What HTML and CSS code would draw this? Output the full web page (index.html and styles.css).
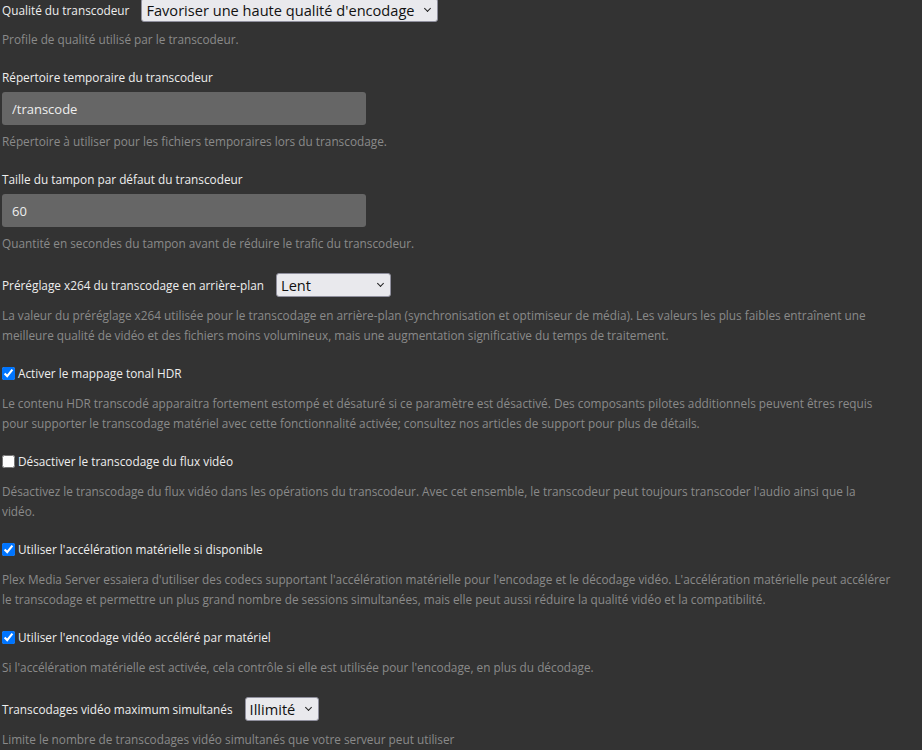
FILE: index.html
```html
<!DOCTYPE html>
<html lang="fr">
<head>
<meta charset="utf-8">
<title>Transcodeur</title>
<link rel="stylesheet" href="styles.css">
</head>
<body>
<form class="settings">
  <div class="setting first">
    <div class="row sel">
      <label class="label" for="quality">Qualité du transcodeur</label>
      <div class="select-wrap">
        <select id="quality" class="select"><option>Favoriser une haute qualité d'encodage</option></select>
      </div>
    </div>
    <p class="desc">Profile de qualité utilisé par le transcodeur.</p>
  </div>

  <div class="setting">
    <label class="label block" for="tmpdir">Répertoire temporaire du transcodeur</label>
    <input id="tmpdir" class="text-input" type="text" value="/transcode">
    <p class="desc">Répertoire à utiliser pour les fichiers temporaires lors du transcodage.</p>
  </div>

  <div class="setting">
    <label class="label block" for="buffer">Taille du tampon par défaut du transcodeur</label>
    <input id="buffer" class="text-input" type="text" value="60">
    <p class="desc">Quantité en secondes du tampon avant de réduire le trafic du transcodeur.</p>
  </div>

  <div class="setting">
    <div class="row sel">
      <label class="label" for="preset">Préréglage x264 du transcodage en arrière-plan</label>
      <div class="select-wrap">
        <select id="preset" class="select fixed"><option>Lent</option></select>
      </div>
    </div>
    <p class="desc">La valeur du préréglage x264 utilisée pour le transcodage en arrière-plan (synchronisation et optimiseur de média). Les valeurs les plus faibles entraînent une meilleure qualité de vidéo et des fichiers moins volumineux, mais une augmentation significative du temps de traitement.</p>
  </div>

  <div class="setting">
    <label class="row check"><input type="checkbox" class="checkbox" checked><span class="label">Activer le mappage tonal HDR</span></label>
    <p class="desc">Le contenu HDR transcodé apparaitra fortement estompé et désaturé si ce paramètre est désactivé. Des composants pilotes additionnels peuvent êtres requis pour supporter le transcodage matériel avec cette fonctionnalité activée; consultez nos articles de support pour plus de détails.</p>
  </div>

  <div class="setting">
    <label class="row check"><input type="checkbox" class="checkbox"><span class="label">Désactiver le transcodage du flux vidéo</span></label>
    <p class="desc">Désactivez le transcodage du flux vidéo dans les opérations du transcodeur. Avec cet ensemble, le transcodeur peut toujours transcoder l'audio ainsi que la vidéo.</p>
  </div>

  <div class="setting">
    <label class="row check"><input type="checkbox" class="checkbox" checked><span class="label">Utiliser l'accélération matérielle si disponible</span></label>
    <p class="desc">Plex Media Server essaiera d'utiliser des codecs supportant l'accélération matérielle pour l'encodage et le décodage vidéo. L'accélération matérielle peut accélérer le transcodage et permettre un plus grand nombre de sessions simultanées, mais elle peut aussi réduire la qualité vidéo et la compatibilité.</p>
  </div>

  <div class="setting">
    <label class="row check"><input type="checkbox" class="checkbox" checked><span class="label">Utiliser l'encodage vidéo accéléré par matériel</span></label>
    <p class="desc">Si l'accélération matérielle est activée, cela contrôle si elle est utilisée pour l'encodage, en plus du décodage.</p>
  </div>

  <div class="setting">
    <div class="row sel">
      <label class="label" for="maxtc">Transcodages vidéo maximum simultanés</label>
      <div class="select-wrap">
        <select id="maxtc" class="select"><option>Illimité</option></select>
      </div>
    </div>
    <p class="desc">Limite le nombre de transcodages vidéo simultanés que votre serveur peut utiliser</p>
  </div>
</form>
</body>
</html>
```

FILE: styles.css
```css
html, body {
  margin: 0;
  background: #333333;
}

body {
  padding: 0 2px;
  font-family: "Open Sans", "Noto Sans", sans-serif;
  color: #eeeeee;
  overflow: hidden;
}

.settings {
  width: 889px;
}

.setting {
  margin-bottom: 18px;
}

.setting.first {
  margin-top: -4px;
}

/* rows holding a label and its control */
.row {
  display: flex;
  align-items: center;
  min-height: 20px;
}

.row.sel {
  min-height: 28px;
}

.row.sel + .desc {
  margin-top: 6px;
}

.first .row.sel + .desc {
  margin-top: 5px;
}

.row.check + .desc {
  margin-top: 10px;
}

.label {
  font-size: 11.8px;
  line-height: 20px;
  color: #eeeeee;
  margin-right: 12px;
}

.label.block {
  display: block;
  margin-right: 0;
}

.desc {
  margin: 6px 0 0;
  font-size: 11.8px;
  line-height: 20px;
  color: #8a8a8a;
}

.text-input {
  display: block;
  box-sizing: border-box;
  width: 364px;
  height: 33px;
  margin-top: 5px;
  padding: 0 10px;
  border: 0;
  border-radius: 3px;
  background: #666666;
  color: #eeeeee;
  font-family: "Open Sans", "Noto Sans", sans-serif;
  font-size: 13px;
}

.select-wrap {
  position: relative;
  display: inline-block;
}

/* chevron drawn over the right side of the select */
.select-wrap::after {
  content: "";
  position: absolute;
  right: 8px;
  top: 8px;
  width: 4px;
  height: 4px;
  border-right: 1.5px solid #222;
  border-bottom: 1.5px solid #222;
  transform: rotate(45deg);
  pointer-events: none;
}

.select {
  appearance: none;
  -webkit-appearance: none;
  box-sizing: border-box;
  height: 24px;
  margin: 0;
  padding: 0 22px 0 4px;
  border: 1px solid #8f8f9d;
  border-radius: 3px;
  background: #e9e9ed;
  color: #111111;
  font-family: "Open Sans", "Noto Sans", sans-serif;
  font-size: 14.6px;
  line-height: 22px;
}

.select.fixed {
  width: 115px;
}

.check {
  cursor: pointer;
}

.checkbox {
  width: 13px;
  height: 13px;
  margin: 0 3px 0 0;
  accent-color: #0075ff;
}
```
